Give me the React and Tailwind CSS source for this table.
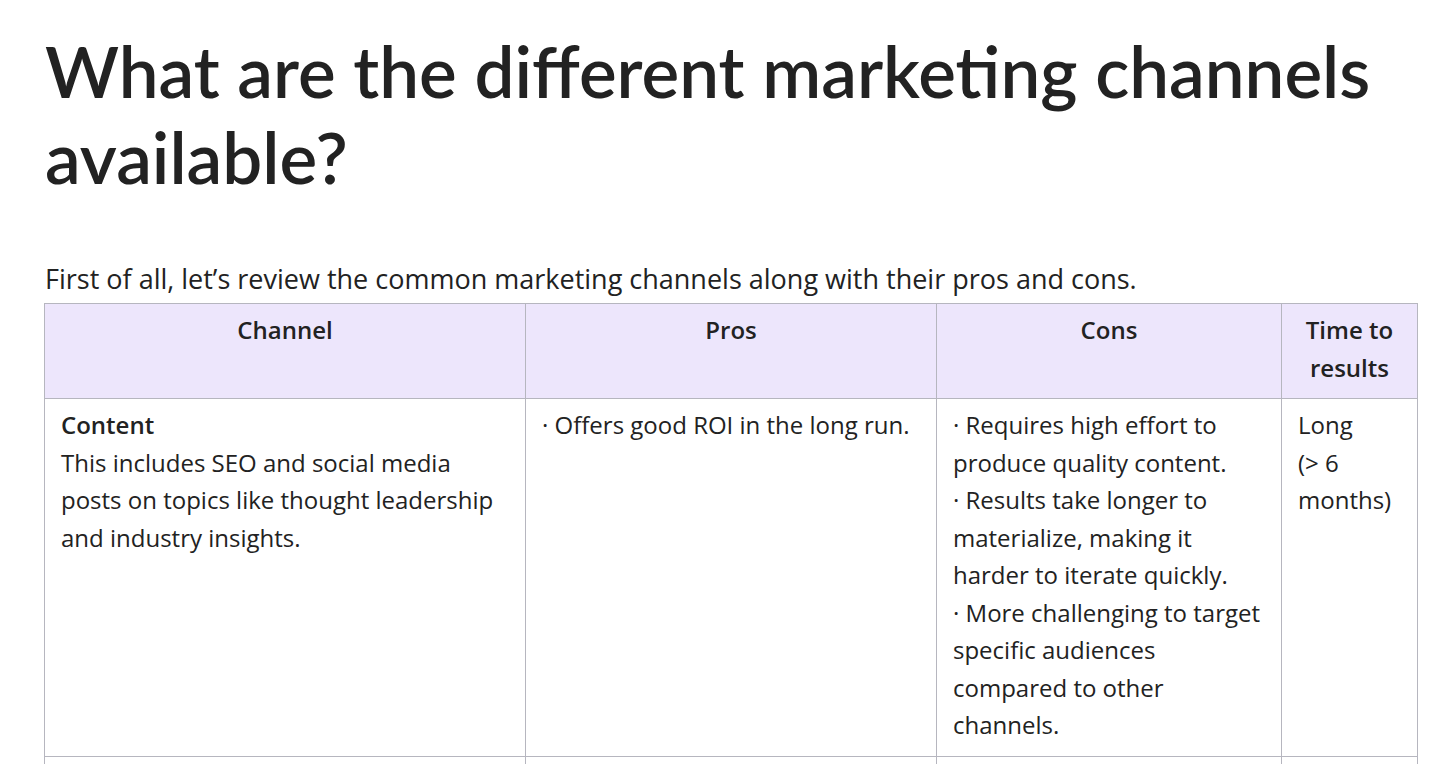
import React from 'react';

const rows = [
  {
    channel: 'Content',
    desc: [
      'This includes SEO and social media',
      'posts on topics like thought leadership',
      'and industry insights.',
    ],
    pros: ['· Offers good ROI in the long run.'],
    cons: [
      '· Requires high effort to',
      'produce quality content.',
      '· Results take longer to',
      'materialize, making it',
      'harder to iterate quickly.',
      '· More challenging to target',
      'specific audiences',
      'compared to other',
      'channels.',
    ],
    time: ['Long', '(> 6', 'months)'],
  },
];

const cell = 'border border-[#b6b6bf] px-4 pt-[7px] pb-[12px] align-top';

const Lines = ({ items }) => (
  <>
    {items.map((t) => (
      <div key={t} className="whitespace-nowrap">
        {t}
      </div>
    ))}
  </>
);

const App = () => {
  return (
    <div className="min-h-screen bg-white text-[#222222] font-['Open_Sans',sans-serif]">
      <div className="pl-[45px] pr-[39px] pt-[28px]">
        <h1 className="font-['Lato',sans-serif] text-[71px] leading-[86px] font-semibold">
          What are the different marketing channels available?
        </h1>
        <p className="mt-[60px] text-[27px] leading-[37px]">
          First of all, let’s review the common marketing channels along with their pros and cons.
        </p>
        <table className="mt-[6px] -ml-px w-[1373px] table-fixed border-collapse text-[24px] leading-[37.5px]">
          <colgroup>
            <col className="w-[481px]" />
            <col className="w-[411px]" />
            <col className="w-[345px]" />
            <col className="w-[136px]" />
          </colgroup>
          <thead>
            <tr className="bg-[#ede6fc]">
              <th className={`${cell} text-center font-semibold h-[95px]`}>Channel</th>
              <th className={`${cell} text-center font-semibold`}>Pros</th>
              <th className={`${cell} text-center font-semibold`}>Cons</th>
              <th className={`${cell} text-center font-semibold`}>
                Time to
                <br />
                results
              </th>
            </tr>
          </thead>
          <tbody>
            {rows.map((r) => (
              <tr key={r.channel}>
                <td className={cell}>
                  <div className="font-semibold">{r.channel}</div>
                  <Lines items={r.desc} />
                </td>
                <td className={cell}>
                  <Lines items={r.pros} />
                </td>
                <td className={cell}>
                  <Lines items={r.cons} />
                </td>
                <td className={cell}>
                  <Lines items={r.time} />
                </td>
              </tr>
            ))}
            <tr>
              <td className={`${cell} h-[120px]`}></td>
              <td className={cell}></td>
              <td className={cell}></td>
              <td className={cell}></td>
            </tr>
          </tbody>
        </table>
      </div>
    </div>
  );
};

export default App;
